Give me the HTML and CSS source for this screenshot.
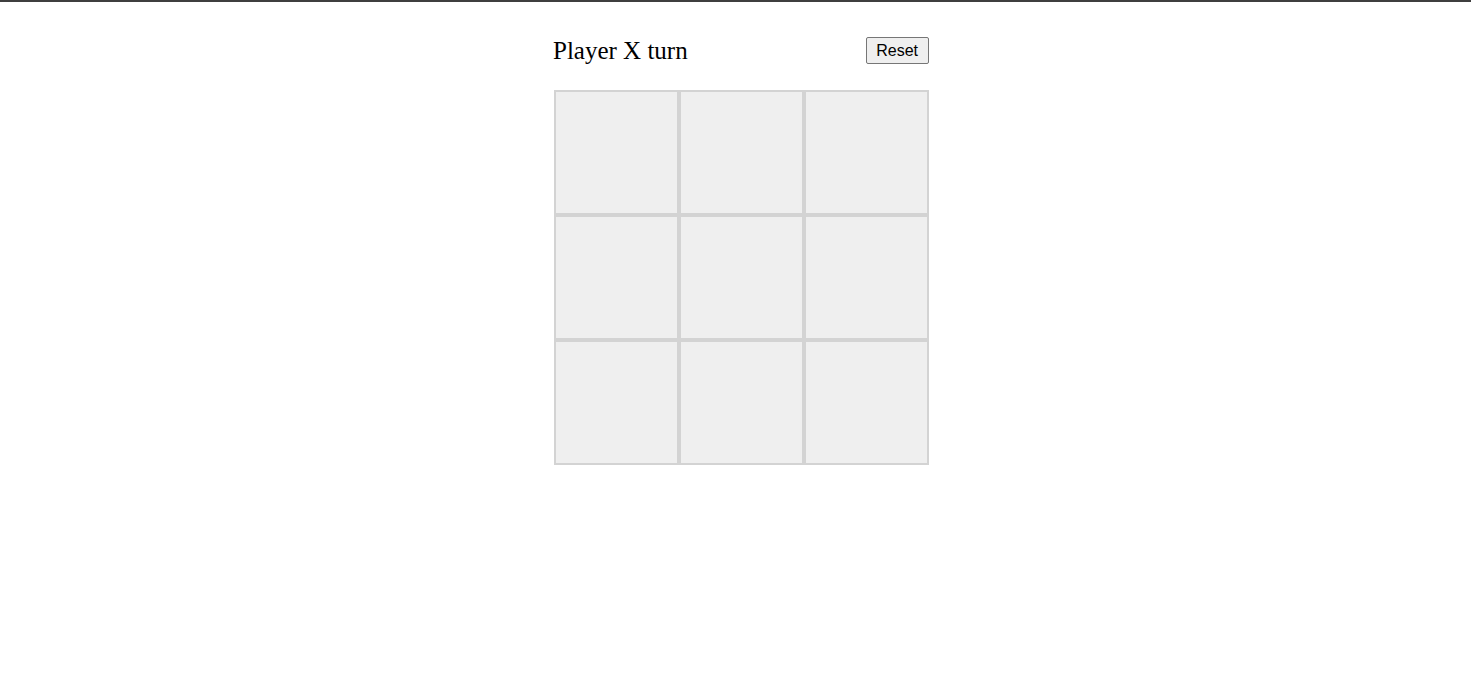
FILE: index.html
```html
<!DOCTYPE html>
<html>
<head>
<meta charset="utf-8">
<link rel="stylesheet" href="styles.css">
</head>
<body>
<div class="topbar"></div>
<main class="game">
  <div class="header">
    <div class="status">Player X turn</div>
    <button class="reset">Reset</button>
  </div>
  <div class="board">
    <div class="cell"></div>
    <div class="cell"></div>
    <div class="cell"></div>
    <div class="cell"></div>
    <div class="cell"></div>
    <div class="cell"></div>
    <div class="cell"></div>
    <div class="cell"></div>
    <div class="cell"></div>
  </div>
</main>
</body>
</html>
```
FILE: styles.css
```css
html, body {
  margin: 0;
  padding: 0;
  background: #ffffff;
}
.topbar {
  height: 2px;
  background: #3f3f3f;
}
.game {
  width: 375px;
  margin-left: calc(50% - 181.5px);
  padding-top: 34px;
}
.header {
  display: flex;
  justify-content: space-between;
  align-items: center;
  height: 29px;
}
.status {
  font-family: "Liberation Serif", "Times New Roman", serif;
  font-size: 25px;
  color: #000;
  margin-left: -1px;
}
.reset {
  font-family: "Liberation Sans", Arial, sans-serif;
  font-size: 16px;
  line-height: 19px;
  padding: 3px 10px 3px 9px;
  border: 1px solid #767676;
  border-radius: 2px;
  background: #efefef;
  color: #000;
}
.board {
  margin-top: 25px;
  display: grid;
  grid-template-columns: repeat(3, 125px);
  grid-template-rows: repeat(3, 125px);
}
.cell {
  box-sizing: border-box;
  border: 2px solid #d3d3d3;
  background: #efefef;
}
```
